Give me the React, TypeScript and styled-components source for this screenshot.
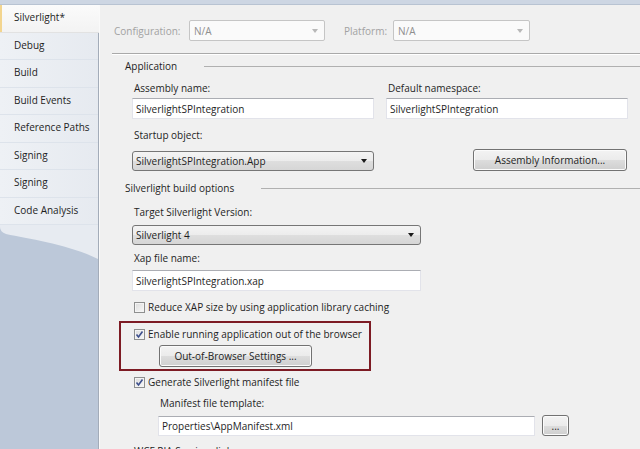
import React from 'react';
import styled, { createGlobalStyle } from 'styled-components';

const Global = createGlobalStyle`
  html, body { margin: 0; padding: 0; }
  body {
    font-family: "Open Sans", "Noto Sans", sans-serif;
    font-size: 10px;
    color: #1e1e1e;
  }
`;

const Frame = styled.div`
  width: 640px;
  height: 449px;
  overflow: hidden;
  display: flex;
  flex-direction: column;
  background: #f0f0f0;
`;

const TopStrip = styled.div`
  flex: none;
  height: 5px;
  box-sizing: border-box;
  background: #cdd6e3;
  border-bottom: 1px solid #b8c3d2;
`;

const Body = styled.div`
  flex: 1;
  display: flex;
  min-height: 0;
`;

const Sidebar = styled.div`
  flex: none;
  width: 98px;
  display: flex;
  flex-direction: column;
  background: #bcc8d9;
  border-right: 1px solid #a3acb9;
  & > * { flex-shrink: 0; }
`;

const TabList = styled.div`
  display: flex;
  flex-direction: column;
  background: linear-gradient(90deg, #eef1f5 0%, #e6eaf0 100%);
`;

const Tab = styled.div<{ $active?: boolean }>`
  height: 27.5px;
  box-sizing: border-box;
  display: flex;
  align-items: center;
  padding: 0 0 2px 14px;
  font-size: 10px;
  border-bottom: 1px solid ${p => (p.$active ? '#e2e2e2' : '#dde3eb')};
  background: ${p => (p.$active ? 'linear-gradient(#fbfbfb, #f3f3f3)' : 'transparent')};
  margin-right: ${p => (p.$active ? '-1px' : '0')};
  box-shadow: ${p => (p.$active ? 'inset 2px 0 0 #f3d58f' : 'none')};
  position: relative;
  z-index: ${p => (p.$active ? 1 : 0)};
`;

const TabCurve = styled.svg`
  display: block;
  width: 98px;
  height: 36px;
`;

const Content = styled.div`
  flex: 1;
  display: flex;
  flex-direction: column;
  padding-left: 12px;
  border-left: 1px solid #fafafa;
  min-width: 0;
  & > * { flex-shrink: 0; }
`;

const ConfigRow = styled.div`
  display: flex;
  align-items: center;
  height: 21px;
  margin-top: 15px;
  padding-left: 2px;
`;

const ConfigLabel = styled.span<{ $w: number; $ml?: number }>`
  width: ${p => p.$w}px;
  margin-left: ${p => p.$ml || 0}px;
  color: #a2a2a2;
  flex: none;
`;

const DisabledCombo = styled.div<{ $w: number }>`
  width: ${p => p.$w}px;
  height: 21px;
  box-sizing: border-box;
  border: 1px solid #c5c5c5;
  border-radius: 2px;
  background: #fafafa;
  color: #8e8e8e;
  display: flex;
  align-items: center;
  justify-content: space-between;
  padding: 0 6px 0 4px;
  flex: none;
`;

const Combo = styled.div<{ $w: number; $mt?: number }>`
  width: ${p => p.$w}px;
  margin-top: ${p => p.$mt || 0}px;
  height: 20px;
  box-sizing: border-box;
  border: 1px solid #767676;
  border-radius: 3px;
  background: linear-gradient(#f4f4f4 0%, #ececec 50%, #dedede 51%, #d6d6d6 100%);
  display: flex;
  align-items: center;
  justify-content: space-between;
  padding: 0 6px 0 3px;
`;

const Arrow = styled.span<{ $light?: boolean }>`
  width: 0;
  height: 0;
  border-left: 3.5px solid transparent;
  border-right: 3.5px solid transparent;
  border-top: 4px solid ${p => (p.$light ? '#b8b8b8' : '#1a1a1a')};
`;

const Etched = styled.div`
  height: 0;
  margin-top: 12px;
  border-top: 1px solid #a9a9a9;
  border-bottom: 1px solid #ffffff;
`;

const GroupHeader = styled.div<{ $mt: number }>`
  display: flex;
  align-items: center;
  height: 16px;
  margin-top: ${p => p.$mt}px;
  padding-left: 13px;
`;

const GroupLine = styled.div`
  flex: 1;
  height: 0;
  margin-left: 27px;
  border-top: 1px solid #b0b0b0;
`;

const Fields = styled.div`
  padding-left: 20px;
  display: flex;
  flex-direction: column;
  & > * { flex-shrink: 0; }
`;

const Grid = styled.div`
  display: grid;
  grid-template-columns: 242px 242px;
  column-gap: 12px;
  align-items: center;
`;

const Label = styled.div<{ $mt: number; $pl?: number }>`
  height: 14px;
  line-height: 14px;
  margin-top: ${p => p.$mt}px;
  padding-left: ${p => (p.$pl === undefined ? 2 : p.$pl)}px;
  white-space: nowrap;
`;

const TextBox = styled.div<{ $w?: number; $mt?: number; $h?: number }>`
  width: ${p => (p.$w ? `${p.$w}px` : 'auto')};
  margin-top: ${p => p.$mt || 0}px;
  height: ${p => p.$h || 21}px;
  box-sizing: border-box;
  background: #ffffff;
  border: 1px solid #e2e3ea;
  border-top-color: #abadb3;
  display: flex;
  align-items: center;
  padding-left: 3px;
  white-space: nowrap;
  overflow: hidden;
`;

const Button = styled.button<{ $w: number; $h?: number; $ml?: number; $mt?: number }>`
  width: ${p => p.$w}px;
  height: ${p => p.$h || 22}px;
  margin-left: ${p => p.$ml || 0}px;
  margin-top: ${p => p.$mt || 0}px;
  box-sizing: border-box;
  border: 1px solid #727272;
  border-radius: 3px;
  background: linear-gradient(#f3f3f3 0%, #ebebeb 50%, #dddddd 51%, #cfcfcf 100%);
  box-shadow: inset 0 0 0 1px #fbfbfb;
  font: inherit;
  color: #1e1e1e;
  padding: 0;
  flex: none;
`;

const AsmButton = styled(Button)`
  justify-self: end;
  margin-right: 1px;
`;

const CheckRow = styled.div<{ $mt: number; $pl?: number }>`
  display: flex;
  align-items: center;
  height: 14px;
  margin-top: ${p => p.$mt}px;
  padding-left: ${p => (p.$pl === undefined ? 22 : p.$pl)}px;
  white-space: nowrap;
`;

const Box = styled.span`
  width: 11px;
  height: 11px;
  box-sizing: border-box;
  border: 1px solid #8e8f8f;
  background: linear-gradient(135deg, #dcdcdc, #f8f8f8);
  box-shadow: inset 0 0 0 1px #f4f4f4;
  margin-right: 3px;
  display: flex;
  align-items: center;
  justify-content: center;
  flex: none;
`;

const Highlight = styled.div`
  margin: 7px 0 0 7px;
  width: 252px;
  height: 50px;
  box-sizing: border-box;
  border: 2px solid #7d1b24;
  padding: 2px 0 0 0;
  display: flex;
  flex-direction: column;
  & > * { flex-shrink: 0; }
`;

const InlineRow = styled.div<{ $mt: number; $pl: number }>`
  display: flex;
  align-items: center;
  margin-top: ${p => p.$mt}px;
  padding-left: ${p => p.$pl}px;
  gap: 7px;
`;

const Check = ({ checked }: { checked?: boolean }) => (
  <Box>
    {checked && (
      <svg width="9" height="9" viewBox="0 0 9 9">
        <path d="M1.5 4.5 L3.5 7 L7.5 1.5" fill="none" stroke="#3d4f8c" strokeWidth="1.6" />
      </svg>
    )}
  </Box>
);

const tabs = ['Silverlight*', 'Debug', 'Build', 'Build Events', 'Reference Paths', 'Signing', 'Signing', 'Code Analysis'];

export default function App() {
  return (
    <Frame>
      <Global />
      <TopStrip />
      <Body>
        <Sidebar>
          <TabList>
            {tabs.map((t, i) => (
              <Tab key={i} $active={i === 0}>{t}</Tab>
            ))}
          </TabList>
          <TabCurve viewBox="0 0 98 36">
            <path d="M0 0 H98 V34 C70 20 30 14 6 9 Q0 7 0 2 Z" fill="#e7ebf1" />
          </TabCurve>
        </Sidebar>
        <Content>
          <ConfigRow>
            <ConfigLabel $w={75}>Configuration:</ConfigLabel>
            <DisabledCombo $w={136}>N/A<Arrow $light /></DisabledCombo>
            <ConfigLabel $w={49} $ml={19}>Platform:</ConfigLabel>
            <DisabledCombo $w={137}>N/A<Arrow $light /></DisabledCombo>
          </ConfigRow>
          <Etched />
          <GroupHeader $mt={3}>Application<GroupLine /></GroupHeader>
          <Fields>
            <Grid>
              <Label $mt={7}>Assembly name:</Label>
              <Label $mt={7}>Default namespace:</Label>
              <TextBox $mt={3}>SilverlightSPIntegration</TextBox>
              <TextBox $mt={3}>SilverlightSPIntegration</TextBox>
              <Label $mt={9}>Startup object:</Label>
              <div />
              <Combo $w={242} $mt={8}>SilverlightSPIntegration.App<Arrow /></Combo>
              <AsmButton $w={154} $mt={7}>Assembly Information...</AsmButton>
            </Grid>
          </Fields>
          <GroupHeader $mt={9}>Silverlight build options<GroupLine /></GroupHeader>
          <Fields>
            <Label $mt={9}>Target Silverlight Version:</Label>
            <Combo $w={289} $mt={6}>Silverlight 4<Arrow /></Combo>
            <Label $mt={6}>Xap file name:</Label>
            <TextBox $w={289} $mt={5}>SilverlightSPIntegration.xap</TextBox>
          </Fields>
          <CheckRow $mt={9}><Check />Reduce XAP size by using application library caching</CheckRow>
          <Highlight>
            <CheckRow $mt={2} $pl={13}><Check checked />Enable running application out of the browser</CheckRow>
            <Button $w={153} $ml={38} $mt={4}>Out-of-Browser Settings ...</Button>
          </Highlight>
          <CheckRow $mt={4}><Check checked />Generate Silverlight manifest file</CheckRow>
          <Label $mt={7} $pl={48}>Manifest file template:</Label>
          <InlineRow $mt={5} $pl={46}>
            <TextBox $w={377} $h={20} $mt={1}>Properties\AppManifest.xml</TextBox>
            <Button $w={27} $h={21}>...</Button>
          </InlineRow>
          <Label $mt={8} $pl={22}>WCF RIA Services link</Label>
        </Content>
      </Body>
    </Frame>
  );
}
